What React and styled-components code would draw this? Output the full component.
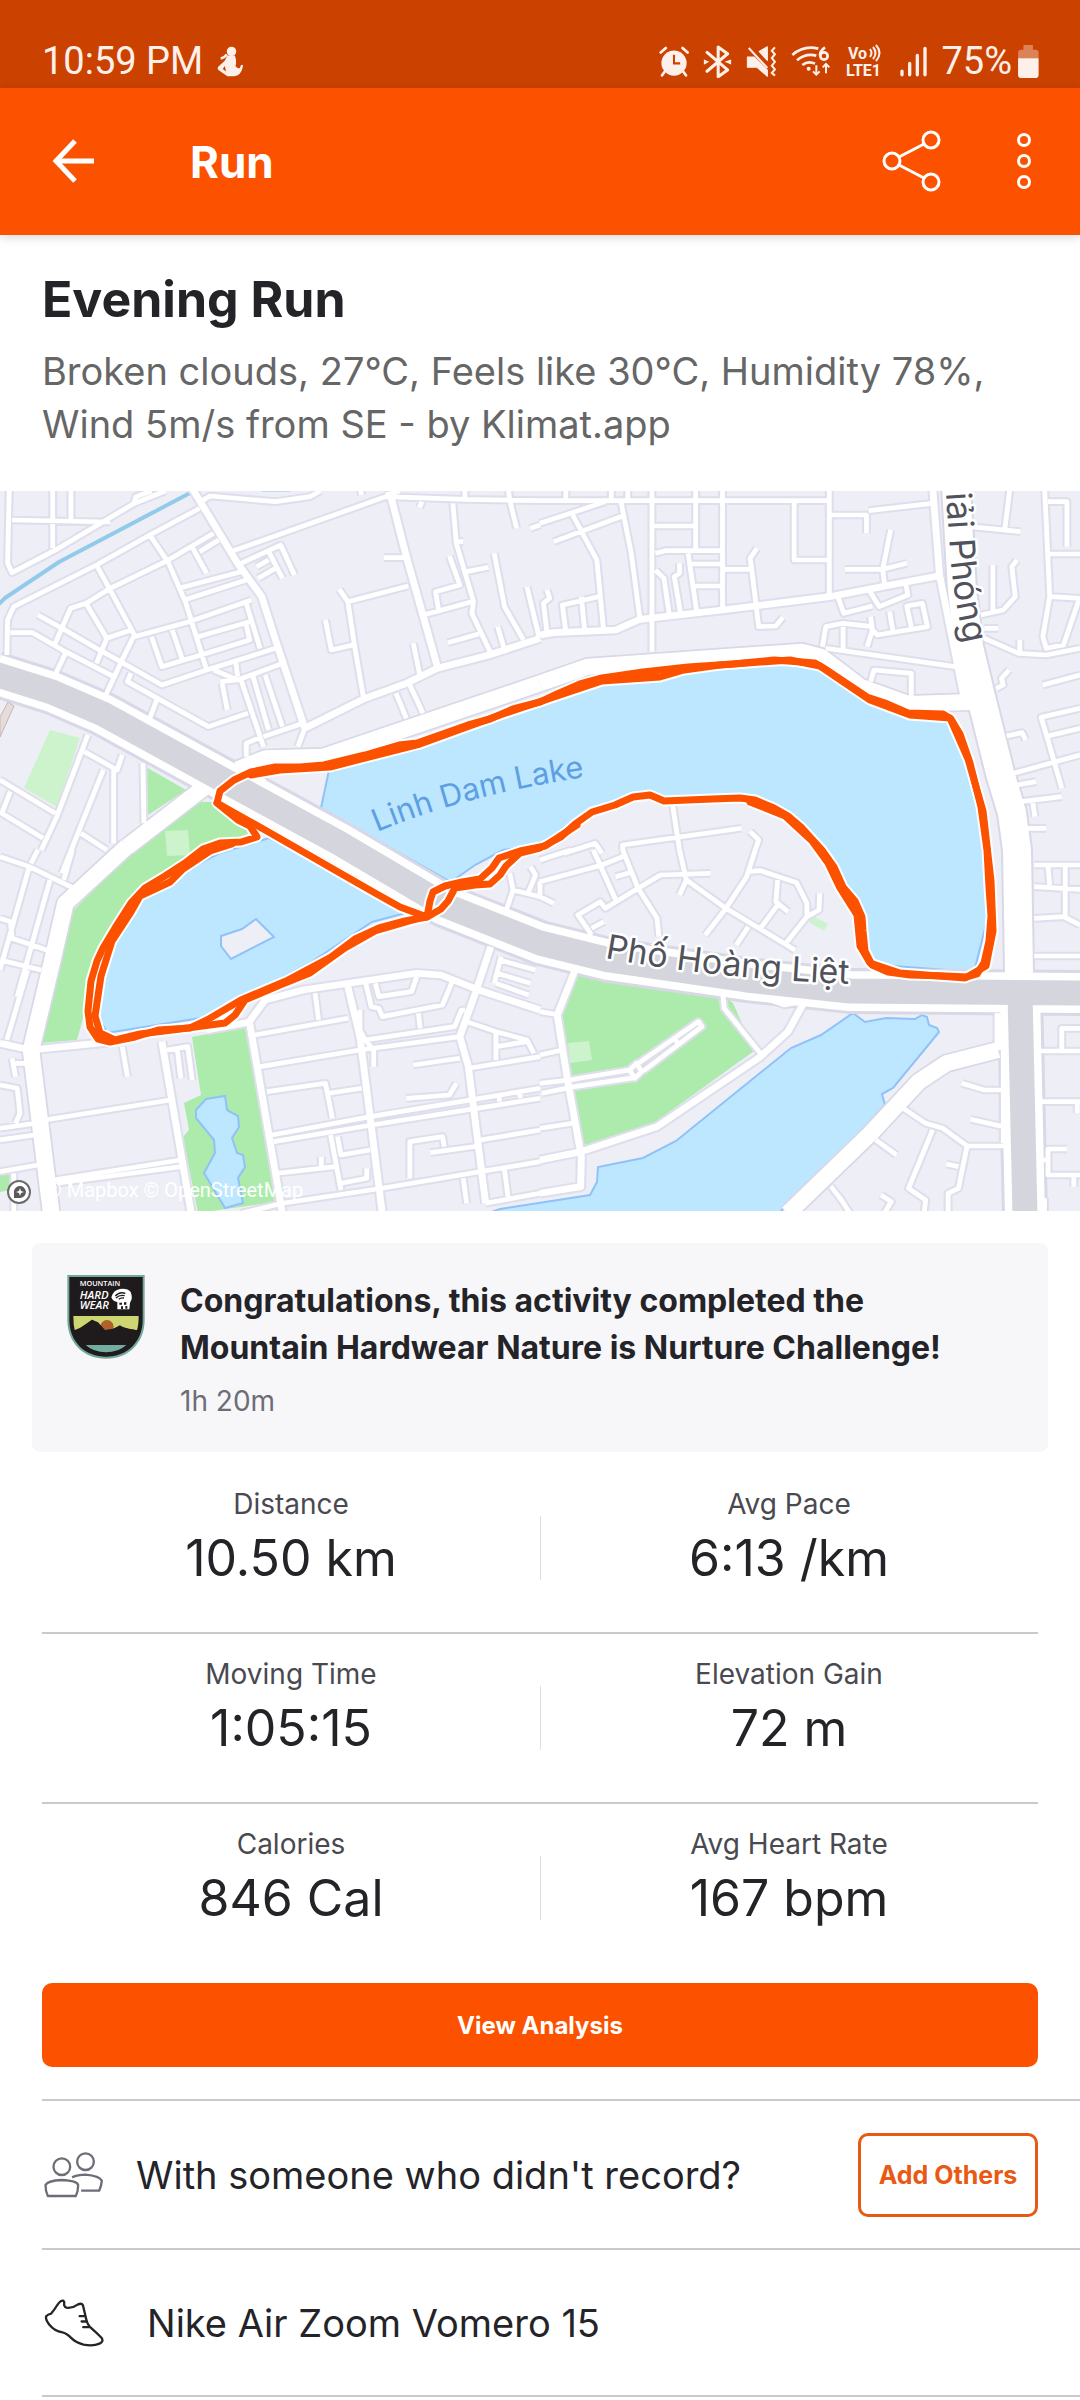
import React from "react";
import styled, { createGlobalStyle } from "styled-components";

// Road network, cut in four tiles. Each tile has its own grid of 1568 x 1110 units.
const tiles = [
  {
    id: "nw",
    x: 0,
    y: -11,
    minor: `M27 20L22 250L35 278L170 205L390 70L480 33 M35 120L320 126 M153 20V205 M206 20V120 M388 70L395 50L440 33
      M20 525L22 420L40 380L280 255L435 165L580 85 M575 70L610 48L800 65L900 50L930 33 M670 215L1120 50L1350 58L1568 62
      M1120 45L1160 33 M1315 70L1325 190L1375 365L1370 400L1425 520 M1325 185H1345 M1350 20V55 M1475 20L1480 60L1500 145
      M1045 20L1050 45 M1225 65L1218 82 M1540 145L1568 135 M1115 233H1180 M1010 365L1185 318 M985 328L1010 365L1030 500L1055 650
      M945 420L962 510L1025 495 M1230 405L1370 365 M1275 400L1265 335L1335 315L1305 228 M1355 275L1418 262
      M1435 220L1465 380L1520 480 M1530 320L1565 470 M1300 488L1390 462 M1445 440L1468 520 M1200 490L1220 590
      M1150 640L1180 715 M1190 615L1228 700 M885 745L865 800 M280 255L320 330L390 465 M435 165L490 250L540 370L600 570
      M160 490L205 385L250 370L320 325L480 245L620 160 M110 405L180 445L280 505L350 545L470 615L600 570L800 505
      M250 370L310 475L380 450 M310 475L280 550 M30 458H95L190 515L330 590 M190 520L160 585 M390 465L350 550L305 650
      M390 470L550 425L730 360 M440 470L470 560L600 520L725 480L715 435 M500 450L530 540 M575 470L725 425
      M520 325L700 275 M535 360L715 300 M560 205L600 280 M580 215L635 180 M700 250L815 195L855 285 M780 215L820 295
      M745 260L780 240 M750 295L800 265 M715 370L755 505 M620 570L690 600L820 550 M685 550L690 590
      M700 600L765 800 M735 590L780 750 M770 585L820 740 M640 605L690 600 M645 610L660 690 M720 700L605 740L370 605L380 580
      M455 660L435 715 M765 770L880 730 M715 830V790L760 770
      M255 765L165 1010L120 1110 M245 815L340 870L355 825 M300 870L230 1050L180 1180 M330 860V1090 M415 850L418 1030
      M0 900L160 1000 M30 935L5 1000L125 1075 M235 1060L310 1110 M740 890L770 905`,
    collector: `M555 20L690 250L760 350L800 480L885 745 M1135 50L1180 230L1270 560 M885 745L1060 655L1180 610L1270 565L1420 525L1568 475`,
    arterial: `M690 868L770 835L940 830L1568 610 M590 925L370 1100`,
  },
  {
    id: "ne",
    x: 540,
    y: -11,
    minor: `M0 62H845 M75 20V60 M207 20V60 M255 20V60 M325 20V515 M452 20V215 M530 20V385 M840 20V350 M330 138H450
      M335 220L365 212H530 M430 220L455 395 M440 252H530 M450 318H530 M530 268H610 M630 205L610 235L615 270L635 440L685 438L705 412
      M738 65V240H835 M0 130L190 65 M40 185L240 108 M95 105L165 240L185 455 M235 65L265 220L290 415
      M20 330L28 355L10 370L20 455 M75 455L65 375L170 350 M120 350L130 455 M335 270L360 295L375 400 M405 250V280L390 290L408 400
      M845 105H948V160 M955 92L1140 70 M885 268H995L1065 250 M1018 150L995 268L1000 310
      M865 350L882 400L965 378 M955 330L985 380L1068 345L1062 310 M820 500L830 440L880 430L965 440 M880 440V510
      M960 410L965 450L950 500 M830 505L1205 560 M965 450L980 465L1125 440L1110 370L1065 378L1078 440 M1015 395L1025 455
      M960 605L970 570L1078 580V660 M1250 140L1395 155 M1365 20L1350 145 M1465 20L1480 350L1460 470L1470 505L1520 495L1568 350
      M1475 65H1530V200 M1480 222H1568 M1485 350L1568 355 M1315 255V395 M1280 405L1345 390L1380 350L1370 260L1385 240
      M1290 475L1390 520L1470 525L1568 505 M1393 480V520 M1290 445H1330 M1325 625L1345 615L1340 595L1362 570
      M1460 615L1568 585 M1568 685L1455 712L1475 780L1515 925 M1475 768L1568 745 M1375 880L1568 825 M1355 768L1400 758L1410 780
      M1385 915L1440 905 M1395 965L1515 950 M1430 960L1437 1010 M1410 1045H1470
      M385 975L405 1110 M240 1110V1095L585 1045 M610 1055L635 1080L625 1110 M70 1120L160 1090L180 1120`,
    collector: `M0 465L40 458L220 450L290 418L530 390L840 350L1170 285 M1140 20L1160 285L1230 645`,
    arterial: `M0 610L140 560L760 515L815 530L930 620L1070 672L1270 665`,
  },
  {
    id: "sw",
    x: 0,
    y: 359,
    minor: `M0 20L85 50L215 115 M85 50L0 360 M110 0L90 40 M210 0L185 90 M145 90L50 440 M0 205L30 215L35 265L135 300
      M0 330L120 360 M80 360L20 570 M355 590L370 680 M485 600L545 590L558 690 M515 600L525 685
      M130 810L495 750 M0 835L105 820 M0 870L100 855 M155 990L525 930 M165 1000L525 950 M0 965L110 945
      M0 705L50 715L58 790L45 820 M35 625L45 680 M45 640H80 M40 970V1090 M915 430L925 510 M740 555L1010 505
      M755 650L1045 600L1335 560 M1090 400L1100 440L1195 425L1210 380 M1062 400L1078 470L1100 475L1110 500L1285 465L1315 390
      M1045 480V540L1060 570L1320 530L1340 480H1350 M1215 490L1220 535 M1060 570L1085 600V650
      M775 725L945 700L965 805 M955 730L1050 715 M790 855L1075 800L1568 715 M795 875L1080 825L1568 745
      M1200 645L1335 625 M1360 655L1568 620 M1355 515L1440 545L1530 570L1550 610 M1440 545V630 M1440 590L1530 575
      M1180 745L1305 735L1325 700 M1450 740V755 M1510 725V745 M805 970L975 950 M960 855L990 1020
      M980 860L990 915L1075 900 M990 1000L1065 985V955 M933 920V950 M1190 985V875L1285 860L1290 890
      M1250 908L1390 888 M1395 870L1568 840 M700 1090L820 1060L1110 1015L1568 935 M1345 985L1355 1060
      M1465 960L1475 1040 M1410 1060L1568 1030 M1450 330L1555 360 M1445 370L1540 400 M1440 400L1535 435 M1455 320L1435 400
      M1480 70L1490 120L1470 180 M1490 120L1568 140 M1540 50L1555 75L1535 125`,
    collector: `M0 580L90 600L330 575 M470 575L555 1090 M720 520L770 450L880 420L1210 370L1280 375L1390 420L1568 480
      M725 520L820 1090 M1010 410L1045 560L1110 1090 M1425 290L1380 430L1335 560L1360 650L1410 1060 M600 540L730 515`,
    arterial: `M370 -12L190 160L150 340L90 600L150 1100`,
  },
  {
    id: "se",
    x: 540,
    y: 359,
    minor: `M0 30L90 0 M0 95L180 45L240 20 M0 95V140L40 160 M155 0L220 150 M240 0L285 115L340 205L345 260 M220 80L260 68
      M285 115L350 75L495 70 M405 0L425 90L405 135 M285 115L190 175L175 155L110 195L150 255 M150 235L185 215
      M425 90L540 175L740 300 M480 255L540 175L600 80L625 0 M600 65L640 62L745 98L775 160V200L810 180L812 130
      M690 90L685 155L720 185 M690 165L640 235 M775 200L710 285 M605 230L570 285 M0 485L55 495
      M0 615L65 600 M0 700L85 690L260 660 M5 730L100 710L275 683 M285 640L460 515L470 530L300 663 M280 640L295 665L275 685L260 660Z
      M390 565L400 580 M0 835L95 820 M530 425L535 475L640 610 M640 440L710 465L765 455
      M1345 480V880 M1225 700L1290 720H1350 M1250 808L1345 830 M1240 888H1355
      M1055 775L1120 820L1170 835L1240 888L1215 1015L1185 1030V1090 M1180 942L1215 950 M1140 840L1070 1015L1120 1050L1115 1090
      M975 870L1035 915 M845 1010L875 1050L900 1090 M990 1035L1020 1055L1000 1090
      M1435 45H1568 M1435 110L1568 118 M1475 50L1480 105 M1525 50V200 M1435 205L1520 200L1568 225 M1435 318H1568
      M1515 600V535H1568 M1445 603H1568 M1445 755H1568 M1560 755V790 M1530 897H1475V975H1568 M1450 930H1475
      M1550 975V1010 M1465 1045V1090`,
    collector: `M100 365L50 495L80 690L120 920L118 1010L0 1030 M0 930L120 905L340 830L640 620L720 545L765 460 M1330 490V600 M1440 495V1090`,
    arterial: `M1330 600L1180 640L1100 695L960 850L720 1090`,
  },
];

const trunk =
  "M-5 183L52 201L103 223L227 291L339 352L444 414L540 452L609 469L747 489L850 500L1085 502 M1020 502L1025 725";
const highway =
  "M956 -5L962 99L969 156L981 206L1000 282L1012 322L1017 359L1019 482";

const route = [
  "M217 312L220 300L234 289L251 281L275 276L300 276L324 274L365 264L399 254L417 252L468 234L490 228L513 218L540 211L557 203L580 193L602 187L643 181L688 176L733 173L774 169L815 172L825 178L867 206L885 212L908 222L943 223L951 228L960 243L970 272L981 316L987 359L989 396L991 425L989 450L984 472L977 483L967 486L946 485L910 484L888 481L872 474L865 460L863 440L862 426L855 410L843 396L834 376L822 359L802 337L788 325L774 317L755 309L740 307L712 308L664 310L650 304L633 306L615 314L592 321L575 333L561 346L540 357L520 362L506 375L500 384L490 393L475 394L455 397L448 410L441 418L427 426L405 430L379 437L355 448L331 466L286 490L241 509L207 529L190 537L158 539L135 546L110 551L98 548L90 536L88 520L91 490L97 470L103 457L115 437L131 412L145 397L165 385L185 372L203 358L220 352L241 351L257 346L250 335L238 329Z",
  "M217 312L240 325L265 339L300 359L340 382L375 402L400 416L427 426L430 410L433 401L445 395L462 391L480 388L492 377L499 367L520 360L545 355L577 334",
  "M251 284L280 279L330 276L420 253L500 224L602 190L660 186L684 179L720 174L790 169L820 175L870 209L910 224L950 227L968 268L983 320L991 390L993 440L986 475L965 487L900 482L870 472L860 455L857 424L840 397L828 372L812 350L785 325L750 311",
  "M430 424L375 440L345 457L310 482L280 494L245 509L235 524L225 532L180 538L140 543L115 549L100 542L95 525L98 505L101 485L112 450L131 421L140 405L170 391L183 378L210 360L232 353",
];

const water = [
  "M329 279L321 317L394 359L451 391L475 374L503 359L540 354L592 319L643 304L671 309L733 305L781 324L822 359L843 399L864 426L867 473L974 481L988 426L984 359L977 289L957 232L905 222L822 176L774 172L660 181L592 194L540 212L413 254Z",
  "M253 352L269 347L296 359L406 422L372 431L310 472L241 509L207 526L107 542L98 526L107 469L131 419L165 389L220 362Z",
  "M480 725L500 718L590 704L597 691L598 676L643 667L676 650L791 557L821 544L853 522L865 531L886 527L915 528L922 524L927 526L929 534L937 537L939 541L893 597L882 603L885 614L850 652L776 725Z",
  "M196 619L206 608L225 605L227 619L238 625L239 636L232 647L237 662L243 664L245 676L238 687L243 712L225 717L204 682L215 662L214 649L196 627Z",
];

const parks = [
  "M146 276L186 299L148 324Z",
  "M200 311L214 311L253 339L220 362L165 389L107 442L90 502L77 549L41 552L71 422L133 359Z",
  "M192 546L248 535L275 711L198 722L183 646L189 639L184 612L201 604Z",
  "M574 483L719 502L733 512L754 560L654 632L583 655L561 522Z",
];

const pitches = [
  "M50 239L80 247L57 316L24 297Z",
  "M165 340L188 339L190 364L167 365Z",
  "M568 552L589 550L592 569L570 572Z",
  "M811 424L828 433L824 440L809 431Z",
];

const stats = [
  [
    { label: "Distance", value: "10.50 km" },
    { label: "Avg Pace", value: "6:13 /km" },
  ],
  [
    { label: "Moving Time", value: "1:05:15" },
    { label: "Elevation Gain", value: "72 m" },
  ],
  [
    { label: "Calories", value: "846 Cal" },
    { label: "Avg Heart Rate", value: "167 bpm" },
  ],
];

function RoadLayer({ kind, color, width }) {
  return tiles.map((tile) => (
    <g key={tile.id} transform={`translate(${tile.x} ${tile.y}) scale(.3444 .3333)`}>
      <path d={tile[kind]} stroke={color} strokeWidth={width} />
    </g>
  ));
}

function RouteMap() {
  return (
    <MapSvg viewBox="0 0 1080 720" role="img" aria-label="Map of the run around Linh Dam Lake">
      <rect width="1080" height="720" fill="#eeeef7" />
      <path d="M8 211L14 215L0 246V226Z" fill="#e6dcdc" stroke="#c9b3b3" />
      {parks.map((d) => (
        <path key={d} d={d} fill="#acebac" />
      ))}
      <path d="M0 684L10 683V699L0 701Z" fill="#acebac" />
      {pitches.map((d) => (
        <path key={d} d={d} fill="#cdf3cd" />
      ))}
      {water.map((d) => (
        <path key={d} d={d} fill="#bde6ff" stroke="#8fc2f8" strokeWidth="2" />
      ))}
      <path d="M221 445L242 438L256 428L274 446L231 468L221 455Z" fill="#eeeef7" stroke="#8fc2f8" strokeWidth="2" />
      <g fill="none" strokeLinejoin="round">
        <path d="M-2 114L5 107L59 71L190 2" stroke="#92cbea" strokeWidth="4" />
        <path d="M262 -1L290 -1" stroke="#92cbea" strokeWidth="3" />
        <RoadLayer kind="minor" color="#dedeed" width="26" />
        <RoadLayer kind="collector" color="#dedeed" width="32" />
        <RoadLayer kind="arterial" color="#d8d8e6" width="58" />
        <path d={highway} stroke="#d8d8e6" strokeWidth="32" />
        <path d={trunk} stroke="#d8d8e6" strokeWidth="46" />
        <RoadLayer kind="minor" color="#fff" width="14" />
        <RoadLayer kind="collector" color="#fff" width="20" />
        <RoadLayer kind="arterial" color="#fff" width="48" />
        <path d={highway} stroke="#fff" strokeWidth="28" />
        <path d={trunk} stroke="#fff" strokeWidth="40" />
        <path d={trunk} stroke="#d5d5de" strokeWidth="25" />
        {route.map((d) => (
          <path key={d} d={d} stroke="#fff" strokeWidth="11" />
        ))}
        {route.map((d) => (
          <path key={d} d={d} stroke="#fc5200" strokeWidth="7" strokeLinecap="round" />
        ))}
        <path id="lakeLine" d="M377 341Q470 302 600 284" />
        <path id="streetLine" d="M605 467Q730 490 880 494" />
        <path id="avenueLine" d="M946 2L950 60Q953 110 972 185" />
      </g>
      <MapLabel fill="#5c9fe3" size={31}>
        <textPath href="#lakeLine">Linh Dam Lake</textPath>
      </MapLabel>
      <MapLabel fill="#50525c" halo size={34}>
        <textPath href="#streetLine">Phố Hoàng Liệt</textPath>
      </MapLabel>
      <MapLabel fill="#50525c" halo size={35}>
        <textPath href="#avenueLine">iải Phóng</textPath>
      </MapLabel>
      <circle cx="19" cy="701" r="11" fill="#fff" stroke="#6b6b6b" strokeWidth="2" />
      <path d="M14 707V702A6 6 0 1 1 20 707Z" fill="#5a5a5a" />
      <path d="M20 697L21 700L24 701L21 702L20 705L19 702L16 701L19 700Z" fill="#fff" />
      <Attribution x="46" y="706">© Mapbox © OpenStreetMap</Attribution>
    </MapSvg>
  );
}

function ChallengeBadge() {
  return (
    <Badge viewBox="22 21 232 252" aria-hidden="true">
      <path d="M22 21H254V155C254 225 205 272 138 272S22 225 22 155Z" fill="#73a79c" />
      <path d="M28 27H248V155C248 222 200 266 138 266S28 222 28 155Z" fill="#1f1b1c" />
      <path d="M40 144H236Q236 170 231 187L205 182L180 174L160 182L140 186L96 155L60 180L44 186Q40 168 40 144Z" fill="#cdd671" />
      <circle cx="141" cy="176" r="20" fill="#b1602a" />
      <path d="M44 190L60 180L78 172L96 155L114 163L135 186L160 182L180 172L190 179L231 187V215H50Z" fill="#1f1b1c" />
      <path d="M77 231H199Q175 253 138 253T77 231Z" fill="#73ada2" />
      <g fill="#fff">
        <BadgeText x="59" y="55" size={22}>MOUNTAIN</BadgeText>
        <BadgeText x="59" y="92" size={34} italic>HARD</BadgeText>
        <BadgeText x="59" y="123" size={34} italic>WEAR</BadgeText>
        <path d="M154 88Q160 66 180 63Q202 60 212 72Q220 92 210 104L208 124H172V102Q158 100 154 88Z" />
      </g>
      <path d="M166 84Q178 70 196 76M168 90Q178 80 194 83M176 94Q184 88 192 90" fill="none" stroke="#1f1b1c" strokeWidth="4" />
      <path d="M178 104H186V110H178ZM192 103H199V110H192ZM183 115H189V123H183ZM196 114H202V122H196Z" fill="#1f1b1c" />
    </Badge>
  );
}

function StatusIcons() {
  return (
    <StatusGroup>
      <Glyph viewBox="346 134 88 92" $width={30} $height={32}>
        <circle cx="390" cy="186" r="37" fill="currentColor" />
        <path d="M351 155L366 142M430 155L415 142M362 212L355 222M418 212L425 222" stroke="currentColor" strokeWidth="8" strokeLinecap="round" />
        <path d="M390 162V187H408" fill="none" stroke="#cb4200" strokeWidth="6" />
      </Glyph>
      <Glyph viewBox="476 132 84 98" $width={29} $height={33}>
        <path d="M487 154L548 206L520 226V138L548 158L487 210" fill="none" stroke="currentColor" strokeWidth="9" strokeLinejoin="round" strokeLinecap="round" />
        <path d="M479 177L490 182L479 188ZM557 177L543 182L557 188Z" fill="currentColor" stroke="currentColor" strokeWidth="3" />
      </Glyph>
      <Glyph viewBox="602 136 90 90" $width={31} $height={31}>
        <path d="M640 152L664 138V178ZM606 168H626L664 206V224L634 198H606Z" fill="currentColor" stroke="currentColor" strokeWidth="3" strokeLinejoin="round" />
        <path d="M610 142L664 200M686 140L677 150L686 160L677 171L686 182L677 193L686 204L677 214L686 222" fill="none" stroke="currentColor" strokeWidth="6" />
      </Glyph>
      <Glyph viewBox="732 134 120 96" $width={40} $height={32}>
        <g fill="none" stroke="currentColor" strokeWidth="8">
          <path d="M736 164Q770 134 814 145M750 180Q776 158 808 166M766 194Q784 180 804 190" />
          <path d="M834 141Q818 152 819 166" />
          <circle cx="831" cy="167" r="11" />
          <path d="M808 195V222M798 213L808 223L818 213M837 219V192M827 201L837 191L847 201" strokeWidth="6" />
        </g>
        <circle cx="785" cy="205" r="6" fill="currentColor" />
      </Glyph>
      <Glyph viewBox="0 0 40 40" $width={40} $height={40}>
        <NetworkText x="3" y="18">Vo</NetworkText>
        <NetworkText x="1" y="35">LTE1</NetworkText>
        <path d="M25 8Q28 12 25 16M28 6Q33 12 28 18M31 4Q38 12 31 20" fill="none" stroke="currentColor" strokeWidth="2" />
      </Glyph>
      <Glyph viewBox="1022 136 84 90" $width={28} $height={31}>
        <path d="M1031 210V221M1054 187V221M1077 163V221M1100 142V221" stroke="currentColor" strokeWidth="10" strokeLinecap="round" />
      </Glyph>
      <BatteryLevel>
        <StatusText>75%</StatusText>
        <Glyph viewBox="1388 132 62 98" $width={21} $height={33}>
          <path d="M1404 132H1432V146H1440Q1449 146 1449 156V172H1388V156Q1388 146 1398 146H1404Z" fill="#dc8259" />
          <path d="M1388 171H1449V220Q1449 230 1439 230H1398Q1388 230 1388 220Z" fill="currentColor" />
        </Glyph>
      </BatteryLevel>
    </StatusGroup>
  );
}

export default function App() {
  return (
    <Page>
      <GlobalStyle />
      <StatusBar>
        <StatusGroup>
          <StatusText>10:59 PM</StatusText>
          <Glyph viewBox="634 138 78 92" $width={27} $height={31}>
            <circle cx="676" cy="154" r="14" fill="currentColor" />
            <path d="M662 163Q656 173 644 175" fill="none" stroke="currentColor" strokeWidth="8" />
            <path d="M664 166H686Q692 182 688 198Q700 212 704 195Q712 190 709 202Q704 226 684 228H664L638 210Q632 204 638 198L656 182Z" fill="currentColor" />
            <path d="M656 197L650 206L660 214Z" fill="#cb4200" />
          </Glyph>
        </StatusGroup>
        <StatusIcons />
      </StatusBar>
      <Toolbar>
        <IconButton aria-label="Back">
          <Glyph viewBox="0 0 44 44" $width={44} $height={44}>
            <path d="M42 22H5M23 2L4 22L23 42" fill="none" stroke="currentColor" strokeWidth="5" />
          </Glyph>
        </IconButton>
        <ToolbarTitle>Run</ToolbarTitle>
        <IconButton aria-label="Share">
          <Glyph viewBox="0 0 60 64" $width={60} $height={64}>
            <g fill="none" stroke="currentColor" strokeWidth="3">
              <circle cx="10" cy="32" r="8" />
              <circle cx="49" cy="11" r="8" />
              <circle cx="49" cy="53" r="8" />
              <path d="M17 28L42 15M17 36L42 49" />
            </g>
          </Glyph>
        </IconButton>
        <IconButton aria-label="More options">
          <Glyph viewBox="0 0 16 60" $width={16} $height={60}>
            <g fill="none" stroke="currentColor" strokeWidth="3">
              <circle cx="8" cy="9" r="5.5" />
              <circle cx="8" cy="30" r="5.5" />
              <circle cx="8" cy="51" r="5.5" />
            </g>
          </Glyph>
        </IconButton>
      </Toolbar>
      <Summary>
        <h1>Evening Run</h1>
        <p>
          Broken clouds, 27°C, Feels like 30°C, Humidity 78%, Wind 5m/s from SE - by Klimat.app
        </p>
      </Summary>
      <RouteMap />
      <Challenge>
        <ChallengeBadge />
        <div className="info">
          <h2>Congratulations, this activity completed the Mountain Hardwear Nature is Nurture Challenge!</h2>
          <span>1h 20m</span>
        </div>
      </Challenge>
      <Stats>
        {stats.map((row) => (
          <StatRow key={row[0].label}>
            {row.map(({ label, value }) => (
              <Stat key={label}>
                <dt>{label}</dt>
                <dd>{value}</dd>
              </Stat>
            ))}
          </StatRow>
        ))}
      </Stats>
      <PrimaryButton>View Analysis</PrimaryButton>
      <List>
        <ListItem>
          <Glyph viewBox="42 58 176 138" $width={59} $height={46} $left={2} $color="#6d6d78">
            <g fill="none" stroke="currentColor" strokeWidth="7" strokeLinejoin="round">
              <circle cx="95" cy="102" r="25" />
              <circle cx="166" cy="87" r="25" />
              <path d="M53 190Q46 176 46 157Q52 144 95 142Q140 144 144 157Q144 176 137 190Z" />
              <path d="M126 134Q142 126 166 126Q208 130 215 144Q214 160 207 174H153" />
            </g>
          </Glyph>
          <ItemText $left={33}>With someone who didn't record?</ItemText>
          <OutlineButton>Add Others</OutlineButton>
        </ListItem>
        <ListItem>
          <Glyph viewBox="42 505 178 145" $width={60} $height={48} $left={2} $color="#242428">
            <path
              d="M62 549Q73 536 80 524Q90 509 98 510Q103 512 101 520Q101 532 114 532Q128 532 142 522Q154 516 158 524L168 566Q172 584 184 594Q202 610 214 622Q222 634 208 640Q190 648 160 643Q136 636 124 624Q108 608 96 606Q72 602 56 582Q44 566 47 557Q52 551 62 549ZM148 557H164M154 573H170M159 590H178"
              fill="none"
              stroke="currentColor"
              strokeWidth="7"
              strokeLinejoin="round"
              strokeLinecap="round"
            />
          </Glyph>
          <ItemText $left={43}>Nike Air Zoom Vomero 15</ItemText>
        </ListItem>
      </List>
    </Page>
  );
}

const GlobalStyle = createGlobalStyle`
  * {
    box-sizing: border-box;
  }
  body {
    margin: 0;
    background-color: #fff;
    color: #242428;
    font-family: Inter, "Liberation Sans", sans-serif;
  }
  h1, h2, p, dl, dd, ul {
    margin: 0;
    padding: 0;
  }
  button {
    font-family: inherit;
    cursor: pointer;
  }
`;

const Page = styled.main`
  display: flex;
  flex-direction: column;
`;

const Glyph = styled.svg`
  display: block;
  flex: none;
  width: ${({ $width }) => $width}px;
  height: ${({ $height }) => $height}px;
  margin-left: ${({ $left }) => $left || 0}px;
  color: ${({ $color }) => $color || "inherit"};
`;

const StatusBar = styled.div`
  display: flex;
  justify-content: space-between;
  height: 88px;
  padding: 34px 41px 0 42px;
  background-color: #cb4200;
  color: #fdf0ea;
`;

const StatusGroup = styled.div`
  display: flex;
  align-items: center;
  gap: 14px;
  height: 54px;
`;

const BatteryLevel = styled.div`
  display: flex;
  align-items: center;
  gap: 6px;
`;

const StatusText = styled.span`
  font-family: Roboto, sans-serif;
  font-size: 38px;
  line-height: 54px;
  font-weight: 400;
`;

const NetworkText = styled.text`
  fill: currentColor;
  font-family: Roboto, sans-serif;
  font-size: 16px;
  font-weight: 700;
`;

const Toolbar = styled.header`
  display: flex;
  align-items: center;
  height: 147px;
  padding: 0 48px 2px 52px;
  background-color: #fc5200;
  color: #fff;
  box-shadow: 0 2px 10px rgba(0, 0, 0, 0.16);
`;

const IconButton = styled.button`
  padding: 0;
  border: none;
  background: none;
  color: inherit;
  & + & {
    margin-left: 74px;
  }
`;

const ToolbarTitle = styled.div`
  flex: 1;
  padding: 2px 0 0 94px;
  font-size: 44px;
  line-height: 56px;
  font-weight: 700;
`;

const Summary = styled.section`
  padding: 32px 42px 40px;
  h1 {
    font-size: 50px;
    line-height: 64px;
    font-weight: 700;
  }
  p {
    margin-top: 14px;
    font-size: 38px;
    line-height: 53px;
    font-weight: 400;
    color: #666;
  }
`;

const MapSvg = styled.svg`
  display: block;
  width: 100%;
  height: auto;
`;

const MapLabel = styled.text`
  font-size: ${({ size }) => size}px;
  font-weight: 400;
  stroke: ${({ halo }) => (halo ? "#fff" : "none")};
  stroke-width: 5px;
  stroke-linejoin: round;
  paint-order: stroke;
`;

const Attribution = styled.text`
  fill: #fff;
  font-family: Roboto, sans-serif;
  font-size: 20px;
`;

const Challenge = styled.section`
  display: flex;
  align-items: flex-start;
  gap: 35px;
  margin: 32px 32px 0;
  padding: 32px 35px 31px;
  border-radius: 8px;
  background-color: #f7f7fa;
  h2 {
    padding-top: 2px;
    font-size: 32px;
    line-height: 47px;
    font-weight: 700;
  }
  span {
    display: block;
    margin-top: 10px;
    font-size: 28px;
    line-height: 40px;
    font-weight: 400;
    color: #6d6d78;
  }
`;

const Badge = styled.svg`
  flex: none;
  width: 78px;
  height: 84px;
`;

const BadgeText = styled.text`
  font-size: ${({ size }) => size}px;
  font-style: ${({ italic }) => (italic ? "italic" : "normal")};
  font-weight: 600;
  font-family: "Open Sans", sans-serif;
`;

const Stats = styled.dl`
  margin: 10px 42px 0;
`;

const StatRow = styled.div`
  display: grid;
  grid-template-columns: 1fr 1fr;
  height: 170px;
  padding-top: 24px;
  & + & {
    padding-top: 22px;
    border-top: 2px solid #c9c9ce;
  }
`;

const Stat = styled.div`
  display: flex;
  flex-direction: column;
  align-items: center;
  & + & {
    background: linear-gradient(#dfdfe3, #dfdfe3) no-repeat 0 30px / 1px 64px;
  }
  dt {
    font-size: 28px;
    line-height: 36px;
    font-weight: 400;
    color: #494950;
  }
  dd {
    margin-top: 4px;
    font-size: 50px;
    line-height: 64px;
    font-weight: 400;
  }
`;

const PrimaryButton = styled.button`
  height: 84px;
  margin: 11px 42px 32px;
  border: none;
  border-radius: 10px;
  background-color: #fc5200;
  color: #fff;
  font-size: 24px;
  font-weight: 700;
`;

const List = styled.ul`
  padding-left: 42px;
  list-style: none;
`;

const ListItem = styled.li`
  display: flex;
  align-items: center;
  height: 149px;
  padding-right: 42px;
  border-top: 2px solid #c9c9ce;
  &:last-child {
    border-bottom: 2px solid #c9c9ce;
  }
`;

const ItemText = styled.span`
  flex: 1;
  padding-left: ${({ $left }) => $left}px;
  font-size: 38px;
  line-height: 50px;
  font-weight: 400;
`;

const OutlineButton = styled.button`
  height: 84px;
  min-width: 180px;
  border: 3px solid #e85a14;
  border-radius: 10px;
  background-color: #fff;
  color: #e85a14;
  font-size: 25px;
  font-weight: 700;
`;
